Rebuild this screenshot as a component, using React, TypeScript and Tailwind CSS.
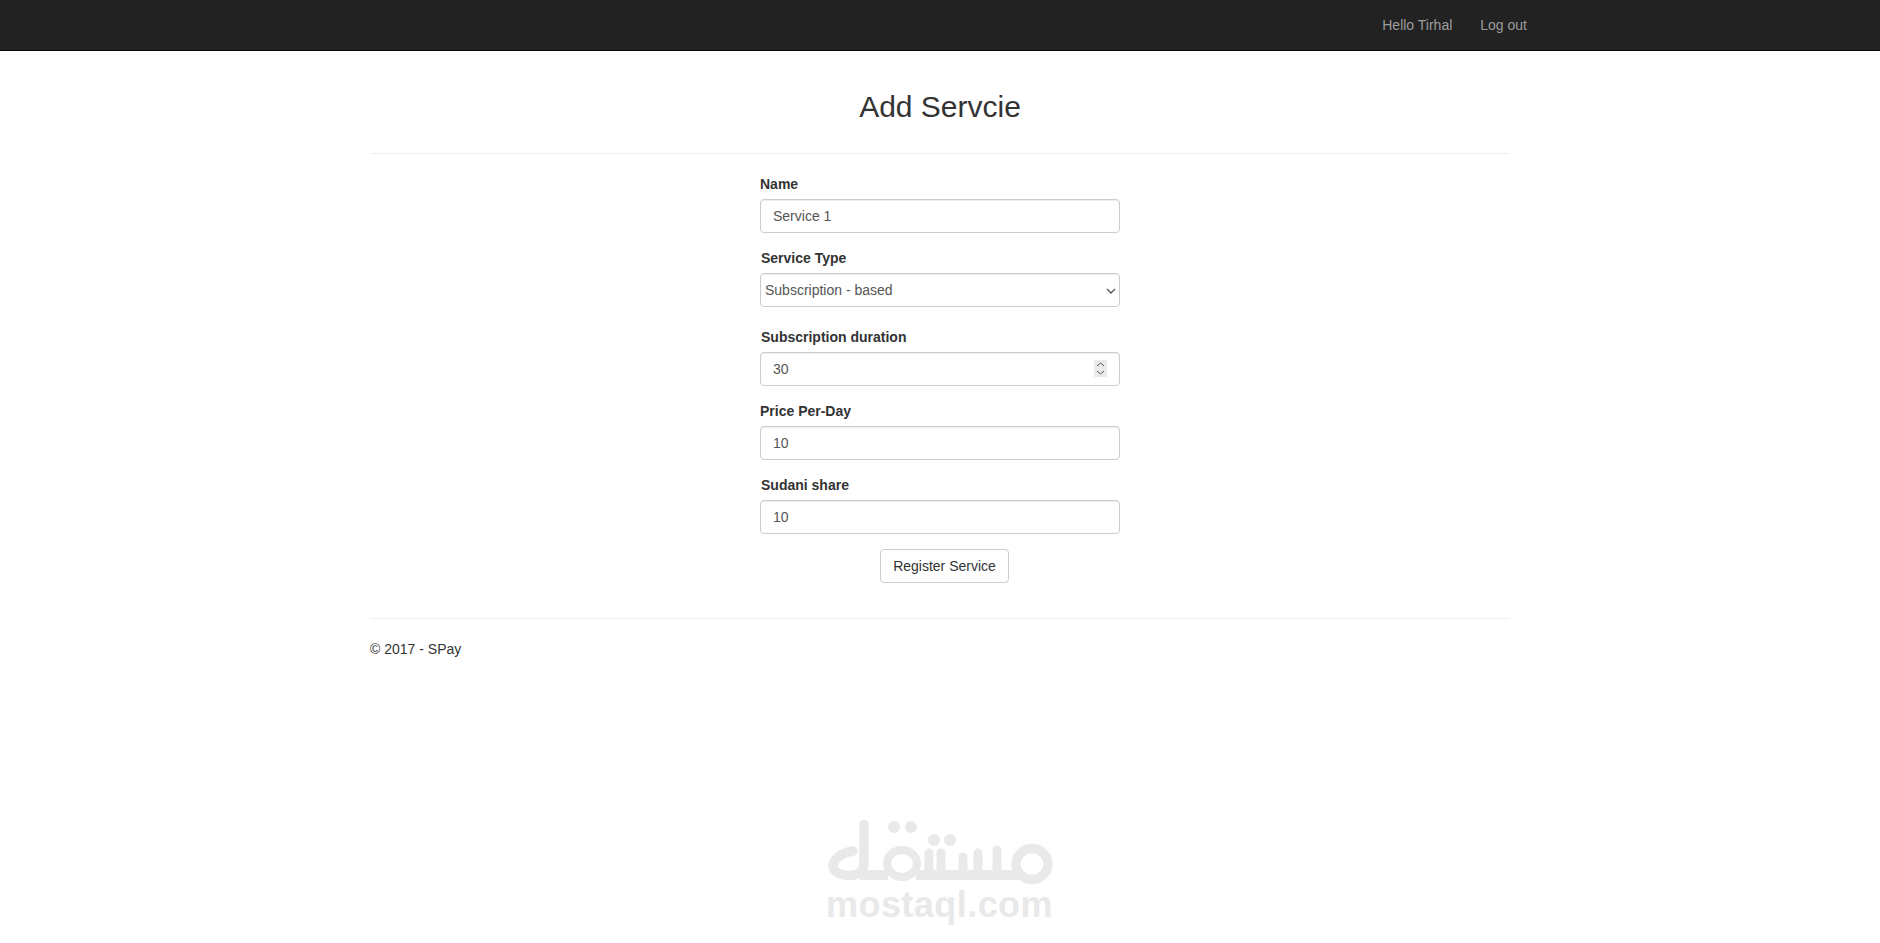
export default function App() {
  const inputCls =
    "block w-full h-[34px] px-3 py-1.5 border border-[#ccc] rounded text-[14px] text-[#555] bg-white shadow-[inset_0_1px_1px_rgba(0,0,0,0.075)] outline-none";
  const labelCls = "block h-5 leading-5 mb-[5px] text-[14px] font-bold text-[#333]";
  return (
    <div className="relative min-h-[943px] bg-white font-['Liberation_Sans',Arial,sans-serif] text-[14px] text-[#333] overflow-hidden">
      <nav className="h-[51px] bg-[#222] border-b border-[#080808] flex justify-end items-center gap-[28px] pr-[353px] text-[#9d9d9d] text-[14px]">
        <a>Hello Tirhal</a>
        <a>Log out</a>
      </nav>
      <main className="w-[1140px] mx-auto">
        <h2 className="mt-[39px] mb-[30px] h-[33px] leading-[33px] text-[30px] text-center font-normal text-[#333]">Add Servcie</h2>
        <hr className="border-0 border-t border-[#eee] mb-5" />
        <form className="w-[360px] mx-auto">
          <div className="mb-[15px]">
            <label className={labelCls}>Name</label>
            <input className={inputCls} readOnly value="Service 1" />
          </div>
          <div className="mb-5">
            <label className={labelCls + " pl-px"}>Service Type</label>
            <div className="relative">
              <select className="block w-full h-[34px] pl-1 appearance-none border border-[#ccc] rounded text-[14px] text-[#555] bg-white shadow-[inset_0_1px_1px_rgba(0,0,0,0.075)] outline-none" defaultValue="a">
                <option value="a">Subscription - based</option>
              </select>
              <svg className="absolute right-[4px] top-[15px] pointer-events-none" width="10" height="6" viewBox="0 0 10 6" fill="none" stroke="#555" strokeWidth="1.3">
                <path d="M1 1 L5 5 L9 1" />
              </svg>
            </div>
          </div>
          <div className="mb-[15px]">
            <label className={labelCls + " pl-px"}>Subscription duration</label>
            <div className="relative">
              <input type="number" className={inputCls + " [&::-webkit-inner-spin-button]:appearance-none"} readOnly value="30" />
              <svg className="absolute left-[334px] top-2 bg-[#ebebeb] pointer-events-none" width="13" height="17" viewBox="0 0 13 17" fill="none" stroke="#555" strokeWidth="1">
                <path d="M3 6 L6.5 3 L10 6 M3 11 L6.5 14 L10 11" />
              </svg>
            </div>
          </div>
          <div className="mb-[15px]">
            <label className={labelCls}>Price Per-Day</label>
            <input className={inputCls} readOnly value="10" />
          </div>
          <div className="mb-[15px]">
            <label className={labelCls + " pl-px"}>Sudani share</label>
            <input className={inputCls} readOnly value="10" />
          </div>
          <button type="button" className="block ml-[120px] w-[129px] h-[34px] border border-[#ccc] rounded bg-white text-[14px] text-[#333]">
            Register Service
          </button>
        </form>
        <hr className="border-0 border-t border-[#eee] mt-[35px] mb-5" />
        <footer className="h-5 leading-5">© 2017 - SPay</footer>
      </main>
      <div className="absolute left-[800px] top-[800px] w-[280px] h-[143px]">
        <svg width="280" height="143" viewBox="0 0 280 143" fill="none" stroke="#e9e9e9" strokeLinecap="round" strokeLinejoin="round">
          <path d="M53 51 C40 53 33 60 33 66 C33 72 41 75.5 50 75.5 C59 75.5 64 71 64 62 L64 24.5" strokeWidth="9.5" />
          <path d="M60 75 L88 75 M116 75 L218 75" strokeWidth="10" strokeLinecap="butt" />
          <ellipse cx="102" cy="63.5" rx="15" ry="13.5" strokeWidth="8" />
          <path d="M129 53 L129 75 M141 53 L141 75 M163 57 L163 75 M178 53 L178 75 M197 50 L197 75" strokeWidth="9" />
          <ellipse cx="232" cy="64" rx="16" ry="15.5" strokeWidth="9.5" />
          <g fill="#e9e9e9" stroke="none">
            <circle cx="94" cy="27" r="6" />
            <circle cx="111" cy="27" r="6" />
            <circle cx="134" cy="40" r="6" />
            <circle cx="150" cy="40" r="6" />
          </g>
        </svg>
        <div className="absolute left-[26px] top-[83px] text-[36px] leading-[44px] tracking-[0.45px] font-bold text-[#e9e9e9] whitespace-nowrap">mostaql.com</div>
      </div>
    </div>
  );
}
